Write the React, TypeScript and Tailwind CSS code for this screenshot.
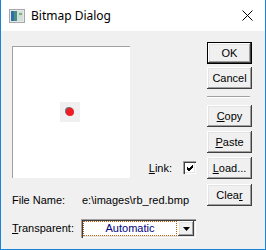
import React from "react";

const btn =
  "w-[45px] h-[22px] flex items-center justify-center bg-[#f0f0f0] text-black shadow-[inset_-1px_-1px_#404040,inset_1px_1px_#ffffff,inset_-2px_-2px_#a0a0a0,inset_2px_2px_#e3e3e3]";

function Btn({ children, def }: { children: React.ReactNode; def?: boolean }) {
  if (def) {
    return (
      <div className="w-[45px] h-[22px] border border-black">
        <div className="w-full h-full flex items-center justify-center bg-[#f0f0f0] shadow-[inset_-1px_-1px_#404040,inset_1px_1px_#ffffff,inset_-2px_-2px_#a0a0a0,inset_2px_2px_#e3e3e3]">
          {children}
        </div>
      </div>
    );
  }
  return <div className={btn}>{children}</div>;
}

export default function App() {
  return (
    <div
      className="w-[266px] h-[250px] bg-white border-x border-b border-[#1883d7] flex flex-col text-[11px] text-black"
      style={{ fontFamily: '"Liberation Sans", Arial, sans-serif' }}
    >
      {/* title bar */}
      <div className="h-[31px] flex items-center pl-[8px] pr-[12px] bg-white shrink-0">
        <svg width="16" height="14" viewBox="0 0 16 14" className="mr-[6px]">
          <rect x="0.5" y="0.5" width="15" height="13" fill="#e8e8e8" stroke="#a8a8a8" />
          <rect x="2" y="2" width="6" height="10" fill="#4a8f86" />
          <rect x="2" y="2" width="3" height="10" fill="#2f6fa8" />
          <rect x="8" y="2" width="6" height="10" fill="#cfe0d8" />
          <rect x="10" y="4" width="3" height="2" fill="#7fb07a" />
        </svg>
        <span className="text-[12px]" style={{ fontFamily: '"Noto Sans", "Open Sans", sans-serif' }}>
          Bitmap Dialog
        </span>
        <div className="ml-auto">
          <svg width="11" height="11" viewBox="0 0 11 11">
            <path d="M0.5 0.5 L10.5 10.5 M10.5 0.5 L0.5 10.5" stroke="#000" strokeWidth="1" />
          </svg>
        </div>
      </div>

      {/* body */}
      <div className="flex-1 bg-[#f0f0f0] flex">
        <div className="w-[195px] pl-[11px] flex flex-col">
          <div className="flex items-end mt-[15px]">
            <div className="w-[122px] h-[132px] bg-white border-t border-l border-[#a0a0a0] flex items-center justify-center">
              <div className="w-[20px] h-[20px] bg-[#f0f0f0] flex items-center justify-center mr-[2px] mb-[2px]">
                <div className="w-[8px] h-[8px] rounded-full bg-[#ee1c24] shadow-[-1px_-1px_0_#707070]" />
              </div>
            </div>
            <div className="flex items-center ml-[19px] mb-[2px]">
              <span>
                <span className="underline">L</span>ink:
              </span>
              <div className="ml-[11px] w-[13px] h-[13px] bg-white shadow-[inset_1px_1px_#a0a0a0,inset_2px_2px_#404040,inset_-1px_-1px_#ffffff,inset_-2px_-2px_#e3e3e3] flex items-center justify-center">
                <svg width="9" height="9" viewBox="0 0 9 9" className="ml-[1px] mt-[1px]">
                  <path d="M1 4 L3 6 L7 2 M1 5 L3 7 L7 3 M1 3 L3 5 L7 1" stroke="#000" strokeWidth="1" fill="none" />
                </svg>
              </div>
            </div>
          </div>
          <div className="flex mt-[16px] leading-[13px]">
            <span className="w-[70px]">File Name:</span>
            <span>e:\images\rb_red.bmp</span>
          </div>
          <div className="flex items-center mt-[12px]">
            <span className="w-[69px]">
              <span className="underline">T</span>ransparent:
            </span>
            <div className="w-[115px] h-[19px] flex p-[2px] bg-white shadow-[inset_1px_1px_#a0a0a0,inset_2px_2px_#404040,inset_-1px_-1px_#ffffff,inset_-2px_-2px_#e3e3e3]">
              <div className="flex-1 border border-dotted border-[#c06000] flex items-center justify-center text-[#000080] leading-none mr-[1px]">
                Automatic
              </div>
              <div className="w-[16px] h-full flex items-center justify-center bg-[#f0f0f0] shadow-[inset_-1px_-1px_#404040,inset_1px_1px_#ffffff,inset_-2px_-2px_#a0a0a0,inset_2px_2px_#e3e3e3]">
                <svg width="7" height="4" viewBox="0 0 7 4">
                  <path d="M0 0 H7 L3.5 4 Z" fill="#000" />
                </svg>
              </div>
            </div>
          </div>
        </div>

        <div className="ml-[11px] flex flex-col pt-[11px]">
          <Btn def>OK</Btn>
          <div className="mt-[3px]">
            <Btn>Cancel</Btn>
          </div>
          <div className="mt-[7px] mb-[7px] w-[43px] border-t border-[#a0a0a0] border-b border-b-white" />
          <Btn>
            <span>
              <span className="underline">C</span>opy
            </span>
          </Btn>
          <div className="mt-[4px]">
            <Btn>
              <span>
                <span className="underline">P</span>aste
              </span>
            </Btn>
          </div>
          <div className="mt-[4px]">
            <Btn>
              <span>
                <span className="underline">L</span>oad...
              </span>
            </Btn>
          </div>
          <div className="mt-[5px]">
            <Btn>
              <span>
                Clea<span className="underline">r</span>
              </span>
            </Btn>
          </div>
        </div>
      </div>
    </div>
  );
}
